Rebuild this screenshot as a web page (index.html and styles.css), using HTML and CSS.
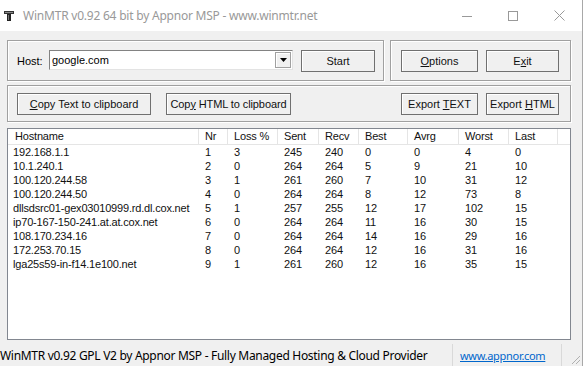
FILE: index.html
```html
<!DOCTYPE html>
<html lang="en">
<head>
    <meta charset="UTF-8">
    <title>WinMTR</title>
    <link rel="stylesheet" href="styles.css">
</head>
<body>
    <div class="window">
        <div class="titlebar">
            <svg class="app-icon" width="10" height="10" viewBox="0 0 10 10">
                <rect x="0" y="0" width="10" height="3" fill="#333"/>
                <rect x="1" y="1" width="8" height="1" fill="#888"/>
                <rect x="3" y="3" width="4" height="7" fill="#222"/>
                <rect x="4" y="4" width="1" height="5" fill="#777"/>
            </svg>
            <span class="title">WinMTR v0.92 64 bit by Appnor MSP - www.winmtr.net</span>
            <div class="caption-buttons">
                <span class="caption-btn">
                    <svg width="10" height="10" viewBox="0 0 10 10"><line x1="0" y1="5.5" x2="10" y2="5.5" stroke="#999" stroke-width="1"/></svg>
                </span>
                <span class="caption-btn">
                    <svg width="10" height="10" viewBox="0 0 10 10"><rect x="0.5" y="0.5" width="9" height="9" fill="none" stroke="#999" stroke-width="1"/></svg>
                </span>
                <span class="caption-btn">
                    <svg width="11" height="11" viewBox="0 0 11 11"><path d="M0.5 0.5 L10.5 10.5 M10.5 0.5 L0.5 10.5" stroke="#999" stroke-width="1" fill="none"/></svg>
                </span>
            </div>
        </div>

        <div class="client">
            <div class="top-row">
                <div class="group host-group">
                    <span class="host-label">Host:</span>
                    <div class="combo">
                        <span class="combo-text">google.com</span>
                        <span class="combo-drop">
                            <svg width="7" height="4" viewBox="0 0 7 4"><path d="M0 0 H7 L3.5 4 Z" fill="#000"/></svg>
                        </span>
                    </div>
                    <button class="btn btn-start">Start</button>
                </div>
                <div class="group options-group">
                    <button class="btn btn-options"><u>O</u>ptions</button>
                    <button class="btn btn-exit">E<u>x</u>it</button>
                </div>
            </div>

            <div class="group export-group">
                <button class="btn btn-copy-text"><u>C</u>opy Text to clipboard</button>
                <button class="btn btn-copy-html">Cop<u>y</u> HTML to clipboard</button>
                <button class="btn btn-options btn-push">Export <u>T</u>EXT</button>
                <button class="btn btn-exit">Export <u>H</u>TML</button>
            </div>

            <div class="list">
                <div class="list-row list-head">
                    <span>Hostname</span><span>Nr</span><span>Loss %</span><span>Sent</span><span>Recv</span><span>Best</span><span>Avrg</span><span>Worst</span><span>Last</span><span></span>
                </div>
                <div class="list-row"><span>192.168.1.1</span><span>1</span><span>3</span><span>245</span><span>240</span><span>0</span><span>0</span><span>4</span><span>0</span></div>
                <div class="list-row"><span>10.1.240.1</span><span>2</span><span>0</span><span>264</span><span>264</span><span>5</span><span>9</span><span>21</span><span>10</span></div>
                <div class="list-row"><span>100.120.244.58</span><span>3</span><span>1</span><span>261</span><span>260</span><span>7</span><span>10</span><span>31</span><span>12</span></div>
                <div class="list-row"><span>100.120.244.50</span><span>4</span><span>0</span><span>264</span><span>264</span><span>8</span><span>12</span><span>73</span><span>8</span></div>
                <div class="list-row"><span>dllsdsrc01-gex03010999.rd.dl.cox.net</span><span>5</span><span>1</span><span>257</span><span>255</span><span>12</span><span>17</span><span>102</span><span>15</span></div>
                <div class="list-row"><span>ip70-167-150-241.at.at.cox.net</span><span>6</span><span>0</span><span>264</span><span>264</span><span>11</span><span>16</span><span>30</span><span>15</span></div>
                <div class="list-row"><span>108.170.234.16</span><span>7</span><span>0</span><span>264</span><span>264</span><span>14</span><span>16</span><span>29</span><span>16</span></div>
                <div class="list-row"><span>172.253.70.15</span><span>8</span><span>0</span><span>264</span><span>264</span><span>12</span><span>16</span><span>31</span><span>16</span></div>
                <div class="list-row"><span>lga25s59-in-f14.1e100.net</span><span>9</span><span>1</span><span>261</span><span>260</span><span>12</span><span>16</span><span>35</span><span>15</span></div>
            </div>
        </div>

        <div class="statusbar">
            <span class="status-main">WinMTR v0.92 GPL V2 by Appnor MSP - Fully Managed Hosting &amp; Cloud Provider</span>
            <span class="status-link"><a href="#">www.appnor.com</a></span>
            <span class="grip">
                <svg width="11" height="11" viewBox="0 0 11 11">
                    <path d="M10 2 L2 10 M10 6 L6 10" stroke="#b0b0b0" stroke-width="1"/>
                </svg>
            </span>
        </div>
    </div>
</body>
</html>
```

FILE: styles.css
```css
* {
    margin: 0;
    padding: 0;
    box-sizing: border-box;
}

body {
    width: 583px;
    height: 366px;
    overflow: hidden;
    background: #f0f0f0;
    font-family: 'Liberation Sans', Arial, sans-serif;
    font-size: 11px;
    color: #000;
}

.window {
    width: 583px;
    height: 366px;
    display: flex;
    flex-direction: column;
    border-right: 1px solid #a8a8a8;
}

/* title bar */

.titlebar {
    height: 31px;
    background: #fff;
    display: flex;
    align-items: center;
    flex-shrink: 0;
}

.app-icon {
    margin-left: 4px;
    margin-top: 1px;
}

.title {
    margin-left: 9px;
    font-family: 'Noto Sans', sans-serif;
    font-size: 12px;
    color: #999;
    letter-spacing: -0.22px;
}

.caption-buttons {
    margin-left: auto;
    display: flex;
    height: 31px;
}

.caption-btn {
    width: 46px;
    height: 31px;
    display: flex;
    align-items: center;
    justify-content: center;
}

/* dialog body */

.client {
    flex: 1;
    padding: 9px 11px 0 7px;
    display: flex;
    flex-direction: column;
}

.top-row {
    display: flex;
    gap: 6px;
}

.group {
    border: 1px solid #a0a0a0;
    box-shadow: inset 1px 1px 0 #fff, 1px 1px 0 #fff;
    display: flex;
    align-items: center;
}

.host-group {
    width: 377px;
    height: 41px;
    padding-left: 9px;
}

.host-label {
    width: 32px;
    margin-top: 1px;
}

.combo {
    width: 244px;
    height: 20px;
    margin-top: -2px;
    background: #fff;
    border: 1px solid #828282;
    border-right-color: #e3e3e3;
    border-bottom-color: #e3e3e3;
    display: flex;
    align-items: center;
}

.combo-text {
    flex: 1;
    padding-left: 2px;
}

.combo-drop {
    width: 16px;
    height: 16px;
    margin-right: 1px;
    background: #f0f0f0;
    border: 1px solid #a0a0a0;
    box-shadow: inset 1px 1px 0 #fff;
    display: flex;
    align-items: center;
    justify-content: center;
}

.btn {
    height: 22px;
    background: #f0f0f0;
    border: 1px solid #707070;
    box-shadow: inset 1px 1px 0 #fff;
    font-family: 'Liberation Sans', Arial, sans-serif;
    font-size: 11px;
    color: #111;
}

.btn-start {
    width: 74px;
    margin-left: 8px;
}

.options-group {
    width: 181px;
    height: 41px;
    padding-left: 10px;
    gap: 8px;
}

.btn-options {
    width: 77px;
}

.btn-exit {
    width: 73px;
}

.export-group {
    margin-top: 4px;
    width: 564px;
    height: 37px;
    padding-left: 9px;
}

.btn-copy-text {
    width: 134px;
}

.btn-copy-html {
    width: 125px;
    margin-left: 15px;
    letter-spacing: -0.1px;
}

.btn-push {
    margin-left: auto;
    margin-right: 8px;
}

.export-group .btn-exit {
    margin-right: 11px;
}

/* list view */

.list {
    margin-top: 6px;
    width: 564px;
    height: 212px;
    background: #fff;
    border: 1px solid #828790;
}

.list-row {
    display: grid;
    grid-template-columns: 191px 29px 50px 41px 40px 49px 51px 50px 49px 1fr;
    height: 14px;
    line-height: 15px;
    white-space: nowrap;
    color: #111;
}

.list-row span {
    padding-left: 5px;
    overflow: hidden;
    letter-spacing: -0.18px;
}

.list-row span + span {
    padding-left: 6px;
}

.list-head {
    height: 16px;
    line-height: 15px;
    border-bottom: 1px solid #e5e5e5;
}

.list-head span {
    border-right: 1px solid #e5e5e5;
}

.list-head span:first-child {
    padding-left: 7px;
}

.list-head span:last-child {
    border-right: none;
}

/* status bar */

.statusbar {
    height: 26px;
    flex-shrink: 0;
    display: flex;
    align-items: flex-end;
    font-family: 'Noto Sans', sans-serif;
    font-size: 12px;
}

.status-main {
    width: 453px;
    height: 22px;
    line-height: 23px;
    border-right: 1px solid #d9d9d9;
    white-space: nowrap;
    overflow: hidden;
    letter-spacing: -0.3px;
}

.status-link {
    width: 109px;
    height: 22px;
    line-height: 23px;
    padding-left: 7px;
    border-right: 1px solid #d9d9d9;
    font-size: 11px;
    letter-spacing: -0.3px;
}

.status-link a {
    color: #0066cc;
}

.grip {
    flex: 1;
    height: 22px;
    display: flex;
    align-items: flex-end;
    justify-content: flex-end;
    padding: 0 1px 1px 0;
}
```
